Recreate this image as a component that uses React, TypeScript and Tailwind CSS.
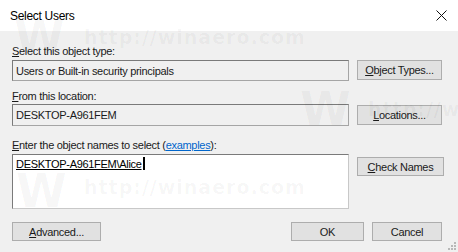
import React from "react";

function Btn({ children, className = "" }: { children: React.ReactNode; className?: string }) {
  return (
    <div
      className={`flex items-center justify-center bg-[#e1e1e1] border border-[#adadad] text-[#1a1a1a] ${className}`}
    >
      {children}
    </div>
  );
}

export default function App() {
  return (
    <div
      className="relative w-[458px] h-[252px] overflow-hidden bg-[#f0f0f0] text-[11px] leading-[14px] text-[#1a1a1a] tracking-[-0.3px]"
      style={{ fontFamily: '"Liberation Sans", Arial, sans-serif' }}
    >
      {/* title bar */}
      <div className="h-[31px] bg-white flex items-center justify-between pl-[10px] pr-[11px]">
        <span className="text-[12px] text-black">Select Users</span>
        <svg width="11" height="11" viewBox="0 0 11 11">
          <path d="M0.5 0.5 L10.5 10.5 M10.5 0.5 L0.5 10.5" stroke="#111" strokeWidth="1" />
        </svg>
      </div>

      <div className="px-[12px] flex flex-col">
        <div className="mt-[13px] h-[14px]">
          <span className="underline">S</span>elect this object type:
        </div>
        <div className="mt-[2px] flex gap-[8px]">
          <div className="w-[337px] h-[21px] border border-[#a5a5a5] border-t-[#7a7a7a] border-l-[#7a7a7a] bg-[#f0f0f0] flex items-center pl-[3px]">
            Users or Built-in security principals
          </div>
          <Btn className="w-[85px] h-[20px]">
            <span>
              <span className="underline">O</span>bject Types...
            </span>
          </Btn>
        </div>

        <div className="mt-[8px] h-[14px]">
          <span className="underline">F</span>rom this location:
        </div>
        <div className="mt-[1px] flex gap-[8px]">
          <div className="w-[337px] h-[22px] border border-[#a5a5a5] border-t-[#7a7a7a] border-l-[#7a7a7a] bg-[#f0f0f0] flex items-center pl-[3px]">
            DESKTOP-A961FEM
          </div>
          <Btn className="w-[85px] h-[20px] mt-[1px]">
            <span>
              <span className="underline">L</span>ocations...
            </span>
          </Btn>
        </div>

        <div className="mt-[12px] h-[14px]">
          <span className="underline">E</span>nter the object names to select (
          <span className="text-[#0066cc] underline">examples</span>):
        </div>
        <div className="mt-[2px] flex gap-[8px]">
          <div className="w-[337px] h-[55px] border border-[#c8c8c8] border-t-[#7a7a7a] border-l-[#7a7a7a] bg-white pl-[3px] pt-[2px]">
            <span className="underline text-black">DESKTOP-A961FEM\Alice</span>
            <span className="inline-block w-[2px] h-[13px] bg-black align-[-2px] ml-[1px]" />
          </div>
          <Btn className="w-[87px] h-[19px] mt-[3px]">
            <span>
              <span className="underline">C</span>heck Names
            </span>
          </Btn>
        </div>

        <div className="mt-[13px] flex">
          <Btn className="w-[89px] h-[19px]">
            <span>
              <span className="underline">A</span>dvanced...
            </span>
          </Btn>
          <Btn className="w-[73px] h-[19px] ml-auto">OK</Btn>
          <Btn className="w-[70px] h-[19px] ml-[8px] mr-[4px]">Cancel</Btn>
        </div>
      </div>

      {/* resize grip */}
      <svg className="absolute right-[1px] bottom-[1px]" width="10" height="10" viewBox="0 0 10 10">
        <rect x="7" y="1" width="2" height="2" fill="#b8b8b8" />
        <rect x="4" y="4" width="2" height="2" fill="#b8b8b8" />
        <rect x="7" y="4" width="2" height="2" fill="#b8b8b8" />
        <rect x="1" y="7" width="2" height="2" fill="#b8b8b8" />
        <rect x="4" y="7" width="2" height="2" fill="#b8b8b8" />
        <rect x="7" y="7" width="2" height="2" fill="#b8b8b8" />
      </svg>

      {/* watermark */}
      <div
        className="pointer-events-none absolute inset-0 text-black/[0.04] font-bold tracking-[1px]"
        style={{ fontFamily: '"DejaVu Sans", sans-serif' }}
      >
        <span className="absolute left-[14px] top-[14px] text-[46px] leading-[46px]">W</span>
        <span className="absolute left-[84px] top-[27px] text-[19px] leading-[20px]">http://winaero.com</span>
        <span className="absolute left-[300px] top-[86px] text-[46px] leading-[46px]">W</span>
        <span className="absolute left-[368px] top-[99px] text-[19px] leading-[20px]">http://w</span>
        <span className="absolute left-[16px] top-[168px] text-[46px] leading-[46px]">W</span>
        <span className="absolute left-[84px] top-[177px] text-[19px] leading-[20px]">http://winaero.com</span>
      </div>
    </div>
  );
}
